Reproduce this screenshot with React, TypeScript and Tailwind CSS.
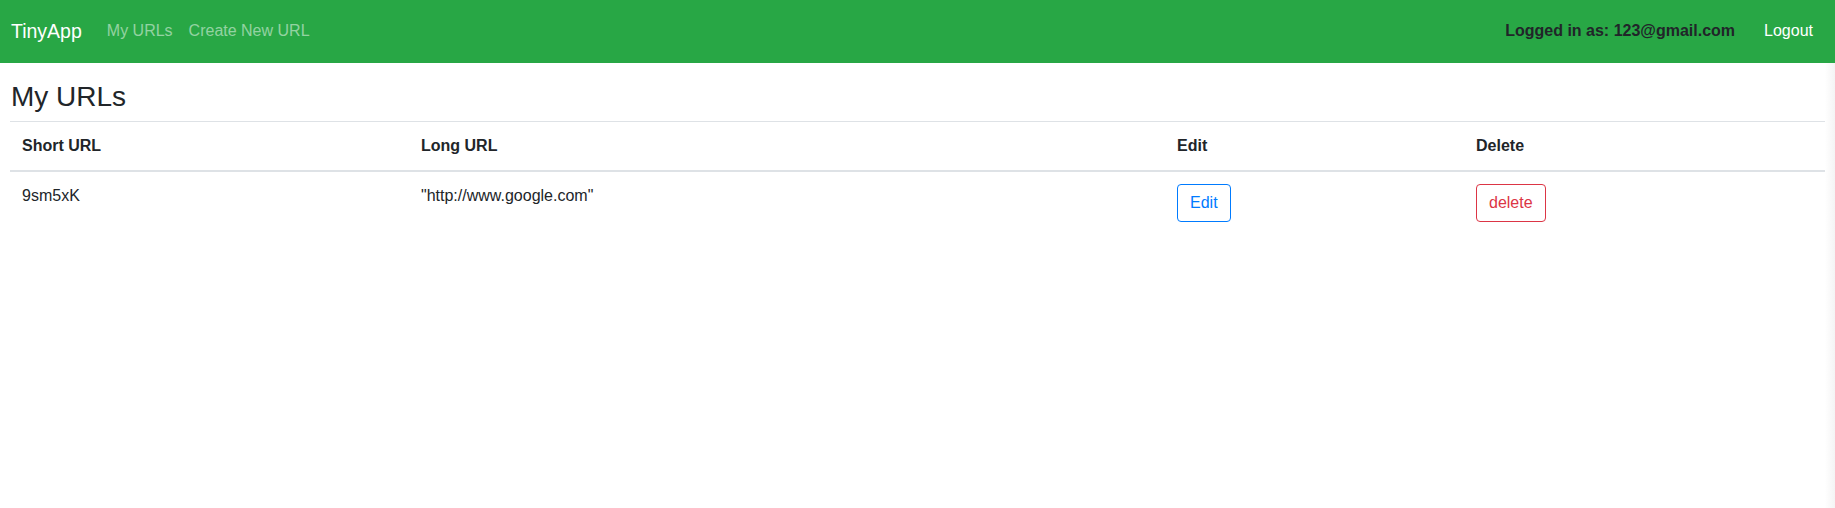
import React from "react";

const rows = [{ short: "9sm5xK", long: '"http://www.google.com"' }];

export default function App() {
  return (
    <div className="min-h-[508px] bg-white text-[#212529] font-['Liberation_Sans',Arial,sans-serif] text-[16px] leading-6">
      {/* Navbar */}
      <nav className="h-[63px] bg-[#28a745] flex items-center pl-[11px] pr-[14px]">
        <a href="#" className="text-white text-[19.5px] leading-[30px] mr-[17px] pb-[2px]">
          TinyApp
        </a>
        <div className="flex items-center pb-[2px]">
          <a href="#" className="px-2 text-white/50">My URLs</a>
          <a href="#" className="px-2 text-white/50">Create New URL</a>
        </div>
        <div className="ml-auto flex items-center pb-[2px]">
          <span className="font-bold text-[#212529] mr-[21px]">Logged in as: 123@gmail.com</span>
          <a href="#" className="px-2 text-white">Logout</a>
        </div>
      </nav>

      <div className="flex">
        <main className="flex-1 pl-[10px]">
          <h3 className="text-[28px] leading-[34px] font-normal pt-[17px] pl-[1px] mb-[7px]">My URLs</h3>
          <table className="w-full border-collapse text-left">
            <thead>
              <tr className="border-t border-[#dee2e6]">
                <th className="w-[399px] p-3 font-bold border-b-2 border-[#dee2e6]">Short URL</th>
                <th className="w-[756px] p-3 font-bold border-b-2 border-[#dee2e6]">Long URL</th>
                <th className="w-[299px] p-3 font-bold border-b-2 border-[#dee2e6]">Edit</th>
                <th className="p-3 font-bold border-b-2 border-[#dee2e6]">Delete</th>
              </tr>
            </thead>
            <tbody>
              {rows.map((r) => (
                <tr key={r.short}>
                  <td className="p-3 align-top">{r.short}</td>
                  <td className="p-3 align-top">{r.long}</td>
                  <td className="p-3 align-top">
                    <button className="border border-[#007bff] text-[#007bff] rounded px-3 py-[6px] leading-6">
                      Edit
                    </button>
                  </td>
                  <td className="p-3 align-top">
                    <button className="border border-[#dc3545] text-[#dc3545] rounded px-3 py-[6px] leading-6">
                      delete
                    </button>
                  </td>
                </tr>
              ))}
            </tbody>
          </table>
        </main>
        <div className="w-[10px] min-h-[445px] bg-gradient-to-r from-white to-[#f4f4f4]" />
      </div>
    </div>
  );
}
